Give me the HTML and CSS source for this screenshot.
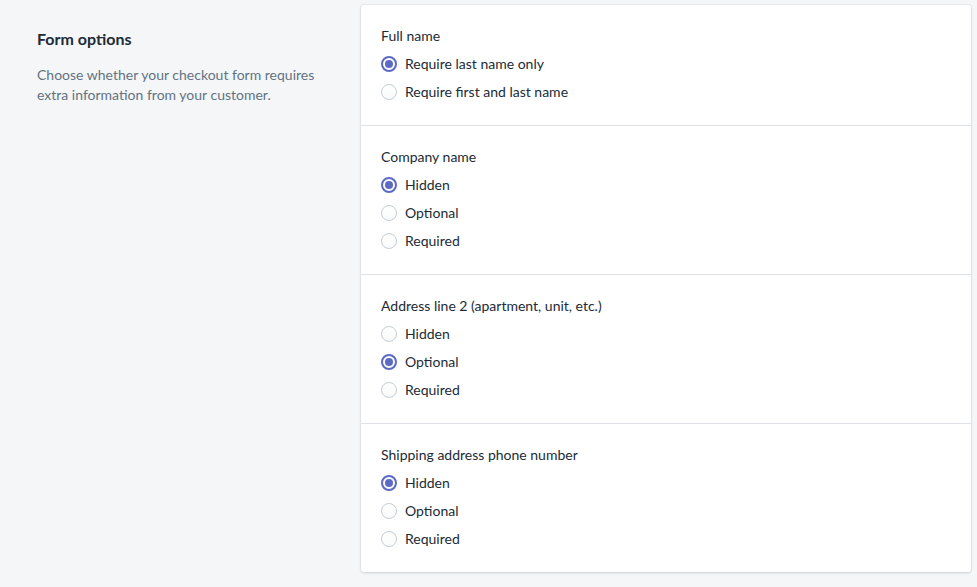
FILE: index.html
```html
<!DOCTYPE html>
<html>
<head>
<meta charset="utf-8">
<link rel="stylesheet" href="styles.css">
</head>
<body>
<div class="page">
  <div class="annotation">
    <h2 class="heading">Form options</h2>
    <p class="desc">Choose whether your checkout form requires extra information from your customer.</p>
  </div>
  <div class="card">
    <div class="section">
      <div class="label">Full name</div>
      <div class="option"><span class="radio checked"></span><span>Require last name only</span></div>
      <div class="option"><span class="radio"></span><span>Require first and last name</span></div>
    </div>
    <div class="section">
      <div class="label">Company name</div>
      <div class="option"><span class="radio checked"></span><span>Hidden</span></div>
      <div class="option"><span class="radio"></span><span>Optional</span></div>
      <div class="option"><span class="radio"></span><span>Required</span></div>
    </div>
    <div class="section">
      <div class="label">Address line 2 (apartment, unit, etc.)</div>
      <div class="option"><span class="radio"></span><span>Hidden</span></div>
      <div class="option"><span class="radio checked"></span><span>Optional</span></div>
      <div class="option"><span class="radio"></span><span>Required</span></div>
    </div>
    <div class="section">
      <div class="label">Shipping address phone number</div>
      <div class="option"><span class="radio checked"></span><span>Hidden</span></div>
      <div class="option"><span class="radio"></span><span>Optional</span></div>
      <div class="option"><span class="radio"></span><span>Required</span></div>
    </div>
  </div>
</div>
</body>
</html>
```
FILE: styles.css
```css
* { box-sizing: border-box; }
html, body { margin: 0; padding: 0; }
body {
  background: #f4f6f8;
  font-family: "Lato", "Open Sans", sans-serif;
  font-size: 14px;
  line-height: 20px;
  color: #212b36;
  height: 587px;
  overflow: hidden;
}
.page {
  display: flex;
  padding: 5px 6px 0 37px;
}
.annotation {
  width: 324px;
  flex: none;
  padding-top: 22px;
  padding-right: 40px;
}
.heading {
  margin: 0;
  font-size: 16px;
  line-height: 24px;
  font-weight: 700;
  color: #212b36;
}
.desc {
  margin: 14px 0 0;
  color: #637381;
}
.card {
  flex: 1;
  background: #fff;
  border-radius: 3px;
  box-shadow: 0 0 0 1px rgba(63,63,68,.05), 0 1px 3px 0 rgba(63,63,68,.15);
}
.section {
  padding: 21px 20px 19px;
  border-top: 1px solid #dfe3e8;
}
.section:first-child { border-top: 0; }
.label {
  margin-bottom: 4px;
}
.option {
  display: flex;
  align-items: center;
  height: 28px;
  gap: 8px;
}
.radio {
  width: 16px;
  height: 16px;
  border-radius: 50%;
  border: 1px solid #c4cdd5;
  background: linear-gradient(180deg, #fff, #f9fafb);
  flex: none;
  position: relative;
}
.radio.checked {
  border: 2px solid #5c6ac4;
}
.radio.checked::after {
  content: "";
  position: absolute;
  left: 2px; top: 2px;
  width: 8px; height: 8px;
  border-radius: 50%;
  background: #5c6ac4;
}
```
